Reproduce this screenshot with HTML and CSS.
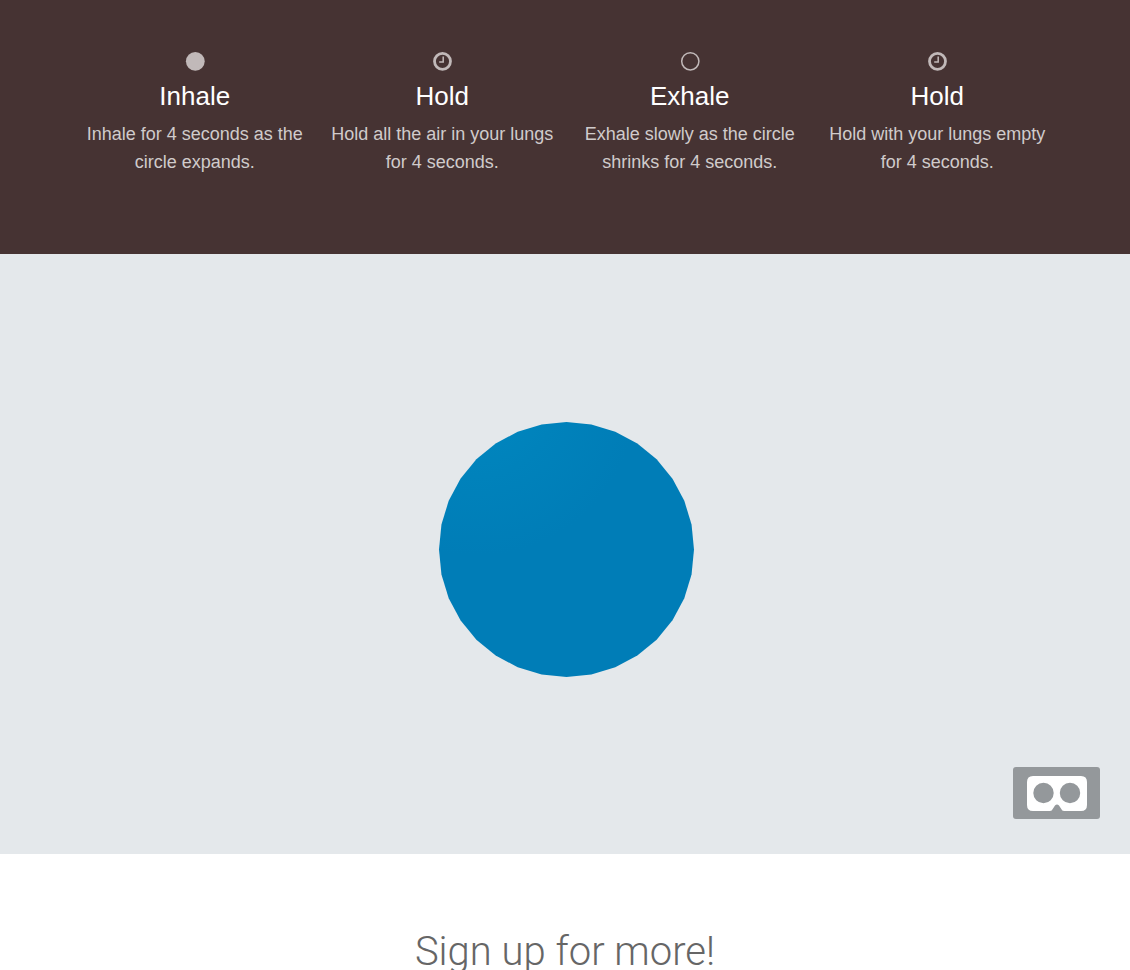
FILE: index.html
```
<!DOCTYPE html>
<html lang="en">
<head>
<meta charset="utf-8">
<meta name="viewport" content="width=device-width, initial-scale=1">
<title>Box Breathing</title>
<link rel="stylesheet" href="styles.css">
</head>
<body>
<section class="steps">
  <div class="step">
    <svg class="step-icon" viewBox="0 0 20 20" aria-hidden="true"><circle cx="10.300" cy="10.300" r="9.400" fill="currentColor"/></svg>
    <h2 class="step-title">Inhale</h2>
    <p class="step-text">Inhale for 4 seconds as the circle expands.</p>
  </div>
  <div class="step">
    <svg class="step-icon" viewBox="0 0 20 20" fill="none" stroke="currentColor" aria-hidden="true"><circle cx="10.500" cy="10.300" r="8" stroke-width="2.800"/><path d="M11.200 5.500v5.600H7.200" stroke-width="1.500"/></svg>
    <h2 class="step-title">Hold</h2>
    <p class="step-text">Hold all the air in your lungs for 4 seconds.</p>
  </div>
  <div class="step">
    <svg class="step-icon" viewBox="0 0 20 20" fill="none" stroke="currentColor" aria-hidden="true"><circle cx="10.300" cy="10.300" r="8.600" stroke-width="1.500"/></svg>
    <h2 class="step-title">Exhale</h2>
    <p class="step-text">Exhale slowly as the circle shrinks for 4 seconds.</p>
  </div>
  <div class="step">
    <svg class="step-icon" viewBox="0 0 20 20" fill="none" stroke="currentColor" aria-hidden="true"><circle cx="10.500" cy="10.300" r="8" stroke-width="2.800"/><path d="M11.200 5.500v5.600H7.200" stroke-width="1.500"/></svg>
    <h2 class="step-title">Hold</h2>
    <p class="step-text">Hold with your lungs empty for 4 seconds.</p>
  </div>
</section>

<section class="scene">
  <svg class="scene-view" viewBox="-565 -300 1130 600" role="img" aria-label="Breathing circle">
    <defs>
      <radialGradient id="shade" gradientUnits="userSpaceOnUse" cx="-70" cy="-120" r="125">
        <stop offset="0" stop-color="#0088c0"/>
        <stop offset="0.5" stop-color="#0082bb"/>
        <stop offset="1" stop-color="#007db7"/>
      </radialGradient>
    </defs>
    <polygon fill="url(#shade)" transform="translate(1.5 -4.5) scale(1.275)" points="100,0 98.08,19.51 92.39,38.27 83.15,55.56 70.71,70.71 55.56,83.15 38.27,92.39 19.51,98.08 0,100 -19.51,98.08 -38.27,92.39 -55.56,83.15 -70.71,70.71 -83.15,55.56 -92.39,38.27 -98.08,19.51 -100,0 -98.08,-19.51 -92.39,-38.27 -83.15,-55.56 -70.71,-70.71 -55.56,-83.15 -38.27,-92.39 -19.51,-98.08 0,-100 19.51,-98.08 38.27,-92.39 55.56,-83.15 70.71,-70.71 83.15,-55.56 92.39,-38.27 98.08,-19.51"/>
  </svg>
  <button class="vr-button" type="button" aria-label="Enter VR">
    <svg class="vr-icon" viewBox="0 0 60 35" aria-hidden="true"><path fill="#fff" fill-rule="evenodd" d="M6 0H54Q60 0 60 6V29Q60 35 54 35H37Q35 35 34.300 33L32 29.500Q30 27.400 28 29.500L25.700 33Q25 35 23 35H6Q0 35 0 29V6Q0 0 6 0ZM16.500 6.800a10.200 10.200 0 1 0 0 20.400a10.200 10.200 0 1 0 0-20.400ZM43 6.800a10.200 10.200 0 1 0 0 20.400a10.200 10.200 0 1 0 0-20.400Z"/></svg>
  </button>
</section>

<section class="signup">
  <h1 class="signup-title">Sign up for more!</h1>
</section>
</body>
</html>
```
FILE: styles.css
```
body {
  margin: 0;
  background: #fff;
  font-family: "Liberation Sans", Helvetica, Arial, sans-serif;
  text-align: center;
}

.steps {
  display: grid;
  grid-template-columns: repeat(4, minmax(0, 1fr));
  padding: 51px 69px 78px 71px;
  background: #463333;
}

.step {
  padding: 0 12px;
  color: #c1b9b9;
}

.step-icon {
  display: block;
  width: 20px;
  height: 20px;
  margin: 0 auto;
}

.step-title {
  margin: 8px 0 7px;
  color: #fff;
  font-size: 26px;
  font-weight: 400;
  line-height: 34px;
}

.step-text {
  margin: 0;
  color: #d0cbcb;
  font-size: 18px;
  line-height: 28px;
}

.scene {
  position: relative;
  background: #e4e8eb;
}

.scene-view {
  display: block;
  width: 100%;
  height: 600px;
}

.vr-button {
  position: absolute;
  right: 30px;
  bottom: 35px;
  display: flex;
  align-items: center;
  justify-content: center;
  width: 87px;
  height: 52px;
  padding: 0;
  border: 0;
  border-radius: 3px;
  background: #94989b;
  cursor: pointer;
}

.vr-icon {
  width: 60px;
  height: 35px;
}

.signup {
  padding: 73px 20px;
}

.signup-title {
  margin: 0;
  color: #666;
  font-family: Roboto, "Liberation Sans", sans-serif;
  font-size: 40px;
  font-weight: 300;
  line-height: 50px;
}
```
